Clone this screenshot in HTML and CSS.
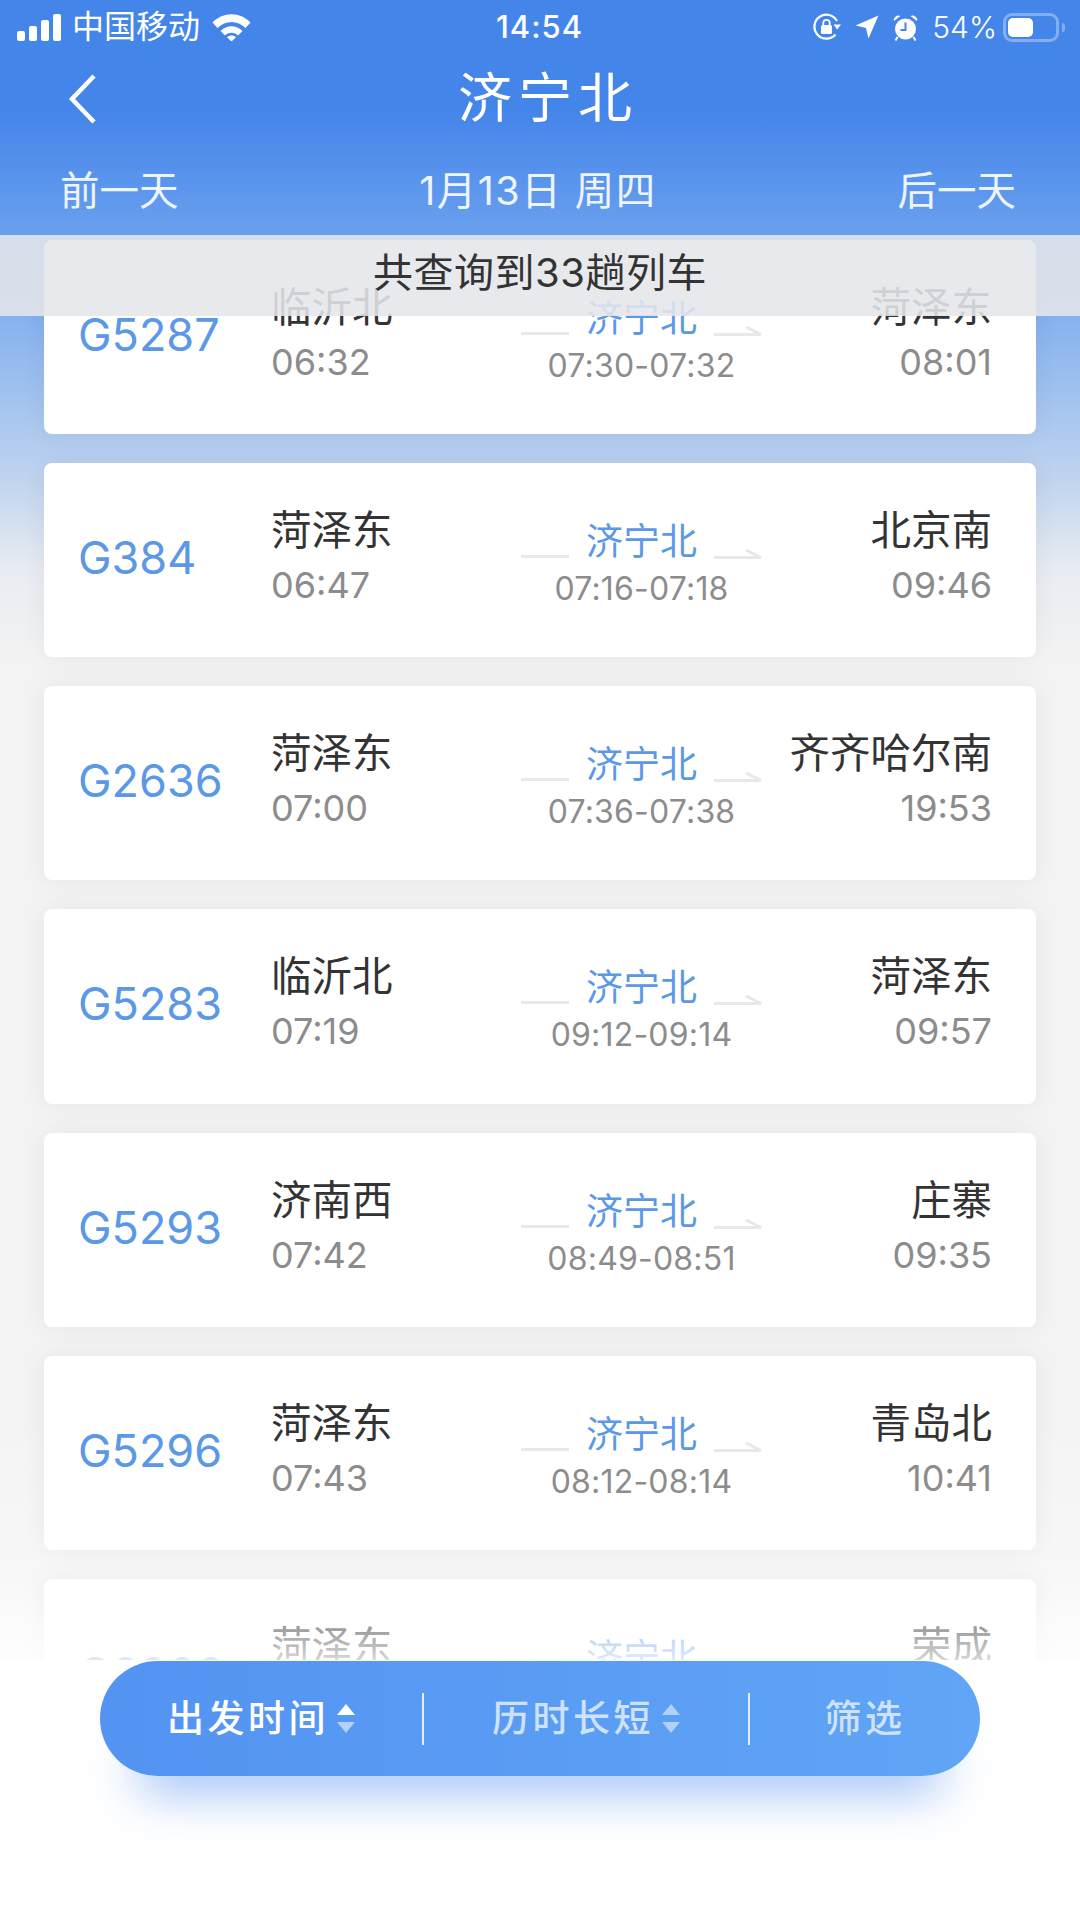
FILE: index.html
```html
<!DOCTYPE html>
<html lang="zh-CN">
<head>
    <meta charset="UTF-8">
    <meta name="viewport" content="width=device-width, initial-scale=1.0">
    <title>济宁北</title>
    <link rel="stylesheet" href="styles.css">
</head>
<body>
    <div class="page">
        <div class="header">
            <div class="status-bar">
                <div class="status-left">
                    <div class="signal">
                        <span class="bar bar-1"></span>
                        <span class="bar bar-2"></span>
                        <span class="bar bar-3"></span>
                        <span class="bar bar-4"></span>
                    </div>
                    <span class="carrier">中国移动</span>
                    <svg class="wifi" width="39" height="28" viewBox="0 0 39 28">
                        <path d="M0.5 9.5 C11 -1.5 28 -1.5 38.5 9.5 L33.5 15 C25.5 7 13.5 7 5.5 15 Z" fill="#fff"/>
                        <path d="M8.5 18 C14.5 11.5 24.5 11.5 30.5 18 L26 22.5 C22.5 18.8 16.5 18.8 13 22.5 Z" fill="#fff"/>
                        <path d="M15 24.2 C17.5 21.8 21.5 21.8 24 24.2 L19.5 28.5 Z" fill="#fff"/>
                    </svg>
                </div>
                <div class="status-time">14:54</div>
                <div class="status-right">
                    <svg class="rotlock" width="28" height="28" viewBox="0 0 28 28">
                        <path d="M22.5 21.5 A12 12 0 1 1 24 8" fill="none" stroke="#fff" stroke-width="2.2"/>
                        <path d="M20.5 11.5 L28 11.5 L24.2 16.5 Z" fill="#fff"/>
                        <rect x="8" y="12" width="11" height="9" rx="1.5" fill="#fff"/>
                        <path d="M10.3 12 V10 a3.2 3.2 0 0 1 6.4 0 V12" fill="none" stroke="#fff" stroke-width="1.8"/>
                    </svg>
                    <svg class="location" width="24" height="24" viewBox="0 0 24 24">
                        <path d="M23.5 0.5 L13.5 23.5 L11 13 L0.5 10.5 Z" fill="#fff"/>
                    </svg>
                    <svg class="alarm" width="25" height="27" viewBox="0 0 25 27">
                        <circle cx="12.5" cy="15" r="10.5" fill="#fff"/>
                        <path d="M1 7 a4.5 4.5 0 0 1 6.5 -5 Z M24 7 a4.5 4.5 0 0 0 -6.5 -5 Z" fill="#fff"/>
                        <path d="M4.5 23 L2.5 26.5 M20.5 23 L22.5 26.5" stroke="#fff" stroke-width="2"/>
                        <path d="M12.5 8.5 V16 H7.5" fill="none" stroke="#4485ea" stroke-width="2"/>
                    </svg>
                    <span class="percent">54%</span>
                    <div class="battery"><div class="battery-fill"></div></div>
                    <div class="battery-tip"></div>
                </div>
            </div>
            <div class="nav">
                <svg class="back" width="30" height="50" viewBox="0 0 30 50">
                    <path d="M26 2 L4 25 L26 48" fill="none" stroke="#fff" stroke-width="4.5"/>
                </svg>
                <div class="title">济宁北</div>
            </div>
            <div class="date-row">
                <span>前一天</span>
                <span class="date">1月13日 周四</span>
                <span>后一天</span>
            </div>
        </div>

        <div class="summary">共查询到33趟列车</div>

        <div class="list">
            <div class="card">
                <div class="train">G5287</div>
                <div class="stop"><div class="station">临沂北</div><div class="time">06:32</div></div>
                <div class="via">
                    <div class="via-row"><span class="line"></span><span class="via-name">济宁北</span><svg class="arrow" width="48" height="10" viewBox="0 0 48 10"><path d="M0 8.5 H47 L32 1" fill="none" stroke="#e8e8e8" stroke-width="3"/></svg></div>
                    <div class="via-time">07:30-07:32</div>
                </div>
                <div class="stop stop-end"><div class="station">菏泽东</div><div class="time">08:01</div></div>
            </div>
            <div class="card">
                <div class="train">G384</div>
                <div class="stop"><div class="station">菏泽东</div><div class="time">06:47</div></div>
                <div class="via">
                    <div class="via-row"><span class="line"></span><span class="via-name">济宁北</span><svg class="arrow" width="48" height="10" viewBox="0 0 48 10"><path d="M0 8.5 H47 L32 1" fill="none" stroke="#e8e8e8" stroke-width="3"/></svg></div>
                    <div class="via-time">07:16-07:18</div>
                </div>
                <div class="stop stop-end"><div class="station">北京南</div><div class="time">09:46</div></div>
            </div>
            <div class="card">
                <div class="train">G2636</div>
                <div class="stop"><div class="station">菏泽东</div><div class="time">07:00</div></div>
                <div class="via">
                    <div class="via-row"><span class="line"></span><span class="via-name">济宁北</span><svg class="arrow" width="48" height="10" viewBox="0 0 48 10"><path d="M0 8.5 H47 L32 1" fill="none" stroke="#e8e8e8" stroke-width="3"/></svg></div>
                    <div class="via-time">07:36-07:38</div>
                </div>
                <div class="stop stop-end"><div class="station">齐齐哈尔南</div><div class="time">19:53</div></div>
            </div>
            <div class="card">
                <div class="train">G5283</div>
                <div class="stop"><div class="station">临沂北</div><div class="time">07:19</div></div>
                <div class="via">
                    <div class="via-row"><span class="line"></span><span class="via-name">济宁北</span><svg class="arrow" width="48" height="10" viewBox="0 0 48 10"><path d="M0 8.5 H47 L32 1" fill="none" stroke="#e8e8e8" stroke-width="3"/></svg></div>
                    <div class="via-time">09:12-09:14</div>
                </div>
                <div class="stop stop-end"><div class="station">菏泽东</div><div class="time">09:57</div></div>
            </div>
            <div class="card">
                <div class="train">G5293</div>
                <div class="stop"><div class="station">济南西</div><div class="time">07:42</div></div>
                <div class="via">
                    <div class="via-row"><span class="line"></span><span class="via-name">济宁北</span><svg class="arrow" width="48" height="10" viewBox="0 0 48 10"><path d="M0 8.5 H47 L32 1" fill="none" stroke="#e8e8e8" stroke-width="3"/></svg></div>
                    <div class="via-time">08:49-08:51</div>
                </div>
                <div class="stop stop-end"><div class="station">庄寨</div><div class="time">09:35</div></div>
            </div>
            <div class="card">
                <div class="train">G5296</div>
                <div class="stop"><div class="station">菏泽东</div><div class="time">07:43</div></div>
                <div class="via">
                    <div class="via-row"><span class="line"></span><span class="via-name">济宁北</span><svg class="arrow" width="48" height="10" viewBox="0 0 48 10"><path d="M0 8.5 H47 L32 1" fill="none" stroke="#e8e8e8" stroke-width="3"/></svg></div>
                    <div class="via-time">08:12-08:14</div>
                </div>
                <div class="stop stop-end"><div class="station">青岛北</div><div class="time">10:41</div></div>
            </div>
            <div class="card">
                <div class="train">G3000</div>
                <div class="stop"><div class="station">菏泽东</div></div>
                <div class="via">
                    <div class="via-row"><span class="via-name via-name-only">济宁北</span></div>
                </div>
                <div class="stop stop-end"><div class="station">荣成</div></div>
            </div>
        </div>

        <div class="list-fade"></div>
        <div class="bottom-panel">
            <div class="sort-pill">
                <div class="sort-item sort-active">
                    <span class="sort-label">出发时间</span>
                    <span class="carets"><i class="caret-up"></i><i class="caret-down"></i></span>
                </div>
                <div class="sort-item">
                    <span class="sort-label">历时长短</span>
                    <span class="carets"><i class="caret-up"></i><i class="caret-down"></i></span>
                </div>
                <div class="sort-item">
                    <span class="sort-label">筛选</span>
                </div>
            </div>
        </div>
    </div>
</body>
</html>
```
FILE: styles.css
```css
* {
    box-sizing: border-box;
}

body {
    margin: 0;
    padding: 0;
    font-family: Inter, "Noto Sans CJK SC", sans-serif;
}

.page {
    position: relative;
    width: 1080px;
    height: 1920px;
    overflow: hidden;
    background: linear-gradient(to bottom, #6fa5ef 235px, #86b2ef 320px, #c0d4ef 480px, #e8ecf1 570px, #f3f3f3 660px, #f3f3f3 1400px, #f9f9f9 1640px);
}

/* 顶部 */
.header {
    height: 235px;
    background: linear-gradient(to bottom, #4485ea 0, #4485ea 110px, #6aa0ee 235px);
    color: #fff;
}

.status-bar {
    height: 54px;
    display: flex;
    justify-content: space-between;
    align-items: center;
    padding: 0 15px 0 17px;
    position: relative;
}

.status-left, .status-right {
    display: flex;
    align-items: center;
}

.signal {
    display: flex;
    align-items: flex-end;
    gap: 4px;
    height: 27px;
}

.bar {
    width: 8px;
    background: #fff;
    border-radius: 2px;
}

.bar-1 { height: 10px; }
.bar-2 { height: 15px; }
.bar-3 { height: 21px; }
.bar-4 { height: 27px; }

.carrier {
    margin-left: 11px;
    font-size: 32px;
    line-height: 40px;
}

.wifi {
    margin-left: 12px;
}

.status-time {
    position: absolute;
    left: 496px;
    top: 8px;
    font-size: 31px;
    line-height: 38px;
    font-weight: 500;
    letter-spacing: 1px;
}

.location {
    margin-left: 14px;
}

.alarm {
    margin-left: 14px;
}

.percent {
    margin-left: 14px;
    font-size: 30px;
    font-weight: 300;
}

.battery {
    margin-left: 6px;
    width: 56px;
    height: 29px;
    border: 3px solid #84aef0;
    border-radius: 9px;
    padding: 2px;
}

.battery-fill {
    width: 25px;
    height: 19px;
    background: #fff;
    border-radius: 5px;
}

.battery-tip {
    margin-left: 3px;
    width: 3px;
    height: 9px;
    background: #84aef0;
    border-radius: 0 3px 3px 0;
}

.nav {
    height: 90px;
    position: relative;
    display: flex;
    justify-content: center;
    align-items: center;
}

.back {
    position: absolute;
    left: 68px;
    top: 20px;
}

.title {
    font-size: 54px;
    line-height: 70px;
    letter-spacing: 6px;
    margin-left: 16px;
}

.date-row {
    display: flex;
    justify-content: space-between;
    padding: 0 64px 0 60px;
    font-size: 39.5px;
    line-height: 50px;
    color: #eef4fe;
    margin-top: 22px;
}

.date {
    letter-spacing: 1.5px;
}

/* 提示条 */
.summary {
    position: absolute;
    left: 0;
    top: 235px;
    width: 100%;
    height: 81px;
    background: rgba(229, 230, 234, 0.88);
    text-align: center;
    font-size: 40px;
    line-height: 76px;
    letter-spacing: 0.5px;
    color: #333;
    z-index: 2;
}

/* 列表 */
.list {
    display: flex;
    flex-direction: column;
    gap: 29px;
    height: 1425px;
    overflow: hidden;
    padding: 4.6px 44px 0;
}

.card {
    flex: none;
    height: 194.3px;
    background: #fff;
    border-radius: 8px;
    padding: 0 44px 0 35px;
    display: grid;
    grid-template-columns: 192px 249px 242px 1fr;
    box-shadow: 0 0 26px rgba(0, 0, 0, 0.06);
}

.train {
    padding-top: 65px;
    margin-left: -1px;
    font-size: 45px;
    line-height: 60px;
    color: #5b98e6;
}

.stop {
    padding-top: 42px;
}

.stop-end {
    text-align: right;
}

.station {
    font-size: 40.5px;
    line-height: 52px;
    color: #333;
    white-space: nowrap;
}

.stop-end .station {
    margin-left: -40px;
}

.time {
    margin-top: 5px;
    font-size: 36px;
    line-height: 46px;
    color: #8c8c8c;
}

.via {
    padding: 54px 0 0 1px;
    text-align: center;
}

.via-row {
    display: flex;
    align-items: center;
    justify-content: space-between;
    height: 50px;
}

.line {
    width: 48px;
    height: 3px;
    background: #e8e8e8;
    margin-top: 29px;
}

.arrow {
    margin-top: 24px;
}

.via-name {
    font-size: 37px;
    line-height: 50px;
    color: #5b98e6;
}

.via-name-only {
    margin: 0 auto;
}

.via-time {
    margin-top: 4px;
    font-size: 32px;
    line-height: 36px;
    letter-spacing: 0.2px;
    color: #8c8c8c;
}

/* 底部 */
.list-fade {
    position: absolute;
    left: 0;
    top: 1570px;
    width: 100%;
    height: 90px;
    background: linear-gradient(to bottom, rgba(255, 255, 255, 0), rgba(255, 255, 255, 0.8));
}

.bottom-panel {
    position: absolute;
    left: 0;
    top: 1660px;
    width: 100%;
    height: 260px;
    background: #fff;
    padding: 1px 100px 0;
}

.sort-pill {
    height: 115px;
    border-radius: 58px;
    background: linear-gradient(to right, #5393f2, #60a5f6);
    box-shadow: 0 50px 50px -36px rgba(72, 135, 240, 0.6);
    display: grid;
    grid-template-columns: 324px 326px 1fr;
    align-items: center;
}

.sort-item {
    display: flex;
    justify-content: center;
    align-items: center;
    gap: 8px;
    height: 52px;
    color: #cfe2fb;
    border-right: 2px solid #e3eefd;
}

.sort-item:last-child {
    border-right: none;
}

.sort-active {
    color: #fff;
}

.sort-label {
    font-size: 37px;
    font-weight: 500;
    line-height: 52px;
    letter-spacing: 3.5px;
}

.carets {
    display: flex;
    flex-direction: column;
    gap: 7px;
}

.caret-up, .caret-down {
    display: block;
    width: 0;
    height: 0;
    border-left: 9px solid transparent;
    border-right: 9px solid transparent;
}

.caret-up {
    border-bottom: 11px solid #b3d0fa;
}

.caret-down {
    border-top: 11px solid #b3d0fa;
}

.sort-active .caret-up {
    border-bottom-color: #fff;
}
```
